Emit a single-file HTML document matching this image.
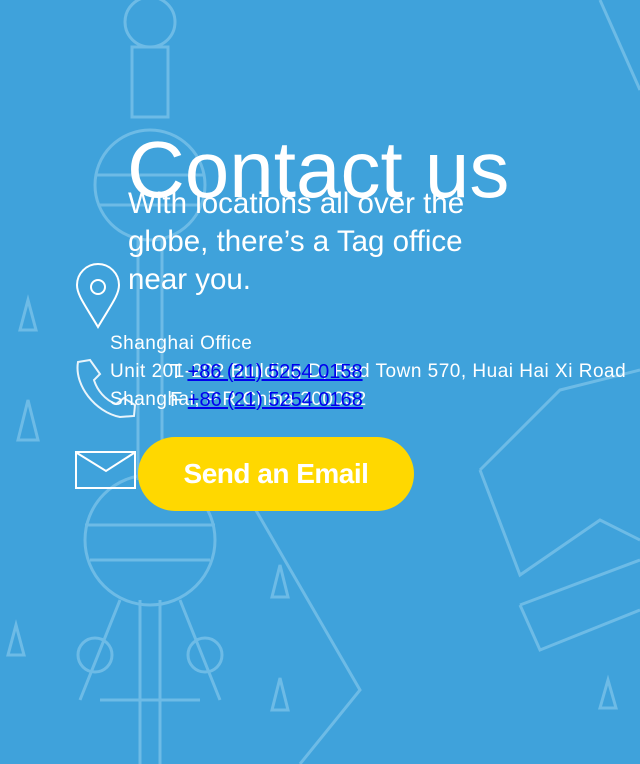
<!DOCTYPE html>
<html><head><meta charset="utf-8"><style>
body{margin:0;width:640px;height:764px;overflow:hidden;background:#3fa2db;font-family:"Liberation Sans",sans-serif;position:relative}
.a{position:absolute;white-space:nowrap}
svg{position:absolute;left:0;top:0}
a{color:#0000ee}
</style></head><body>
<svg width="640" height="764" fill="none" stroke="#6dbbe6" stroke-width="3">
<circle cx="150" cy="22" r="25"/>
<rect x="132" y="47" width="36" height="70"/>
<circle cx="150" cy="185" r="55"/>
<line x1="95" y1="175" x2="205" y2="175"/><line x1="98" y1="205" x2="202" y2="205"/>
<line x1="138" y1="240" x2="138" y2="480"/><line x1="162" y1="240" x2="162" y2="480"/>
<circle cx="150" cy="540" r="65"/>
<line x1="85" y1="525" x2="215" y2="525"/><line x1="90" y1="560" x2="210" y2="560"/>
<path d="M120 600 L80 700 M180 600 L220 700 M140 600 L140 764 M160 600 L160 764 M100 700 L200 700"/>
<circle cx="95" cy="655" r="17"/><circle cx="205" cy="655" r="17"/>
<path d="M20 330 L28 300 L36 330Z M18 440 L28 400 L38 440Z M272 597 L280 565 L288 597Z M272 710 L280 678 L288 710Z M8 655 L16 625 L24 655Z M600 708 L608 680 L616 708Z"/>
<path d="M250 500 L360 690 L300 764"/>
<path d="M480 470 L560 390 L640 370 M480 470 L520 575 L600 520 L640 540"/>
<path d="M520 605 L640 560 M520 605 L540 650 L640 610"/>
<path d="M600 0 L640 90"/>
</svg>
<div class="a" style="left:127px;top:124px;font-size:80px;color:#fff">Contact us</div>
<div class="a" style="left:128px;top:185px;font-size:29.5px;line-height:38px;color:#fff;white-space:normal;width:380px">With locations all over the globe, there’s a Tag office near you.</div>
<svg width="640" height="764" fill="none" stroke="#fff" stroke-width="2">
<path d="M98 327 C85 305 77 295 77 285 A21 21 0 0 1 119 285 C119 295 111 305 98 327Z"/>
<circle cx="98" cy="287" r="7"/>
<path d="M90 360 L78 362 C74 385 95 412 120 417 L134 416 L135 405 L124 398 L116 404 C105 400 97 390 94 380 L100 374 Z" stroke="#e9f4fb"/>
<rect x="76" y="452" width="59" height="36"/>
<path d="M77 453 L106 471 L134 453"/>
</svg>
<div class="a" style="left:110px;top:330px;font-size:19px;letter-spacing:0.5px;color:#fff;line-height:28px">Shanghai Office<br>Unit 201-202 Building D, Red Town 570, Huai Hai Xi Road<br>Shanghai, P.R.China 200052</div>
<div class="a" style="left:170px;top:358px;font-size:20px;color:#fff;line-height:28px">T <a href="#">+86 (21) 5254 0158</a><br>F <a href="#">+86 (21) 5254 0168</a></div>
<div class="a" style="left:138px;top:437px;width:276px;height:74px;border-radius:37px;background:#ffd800;color:#fff;font-size:28px;font-weight:bold;text-align:center;line-height:74px;letter-spacing:-0.5px">Send an Email</div>
</body></html>
